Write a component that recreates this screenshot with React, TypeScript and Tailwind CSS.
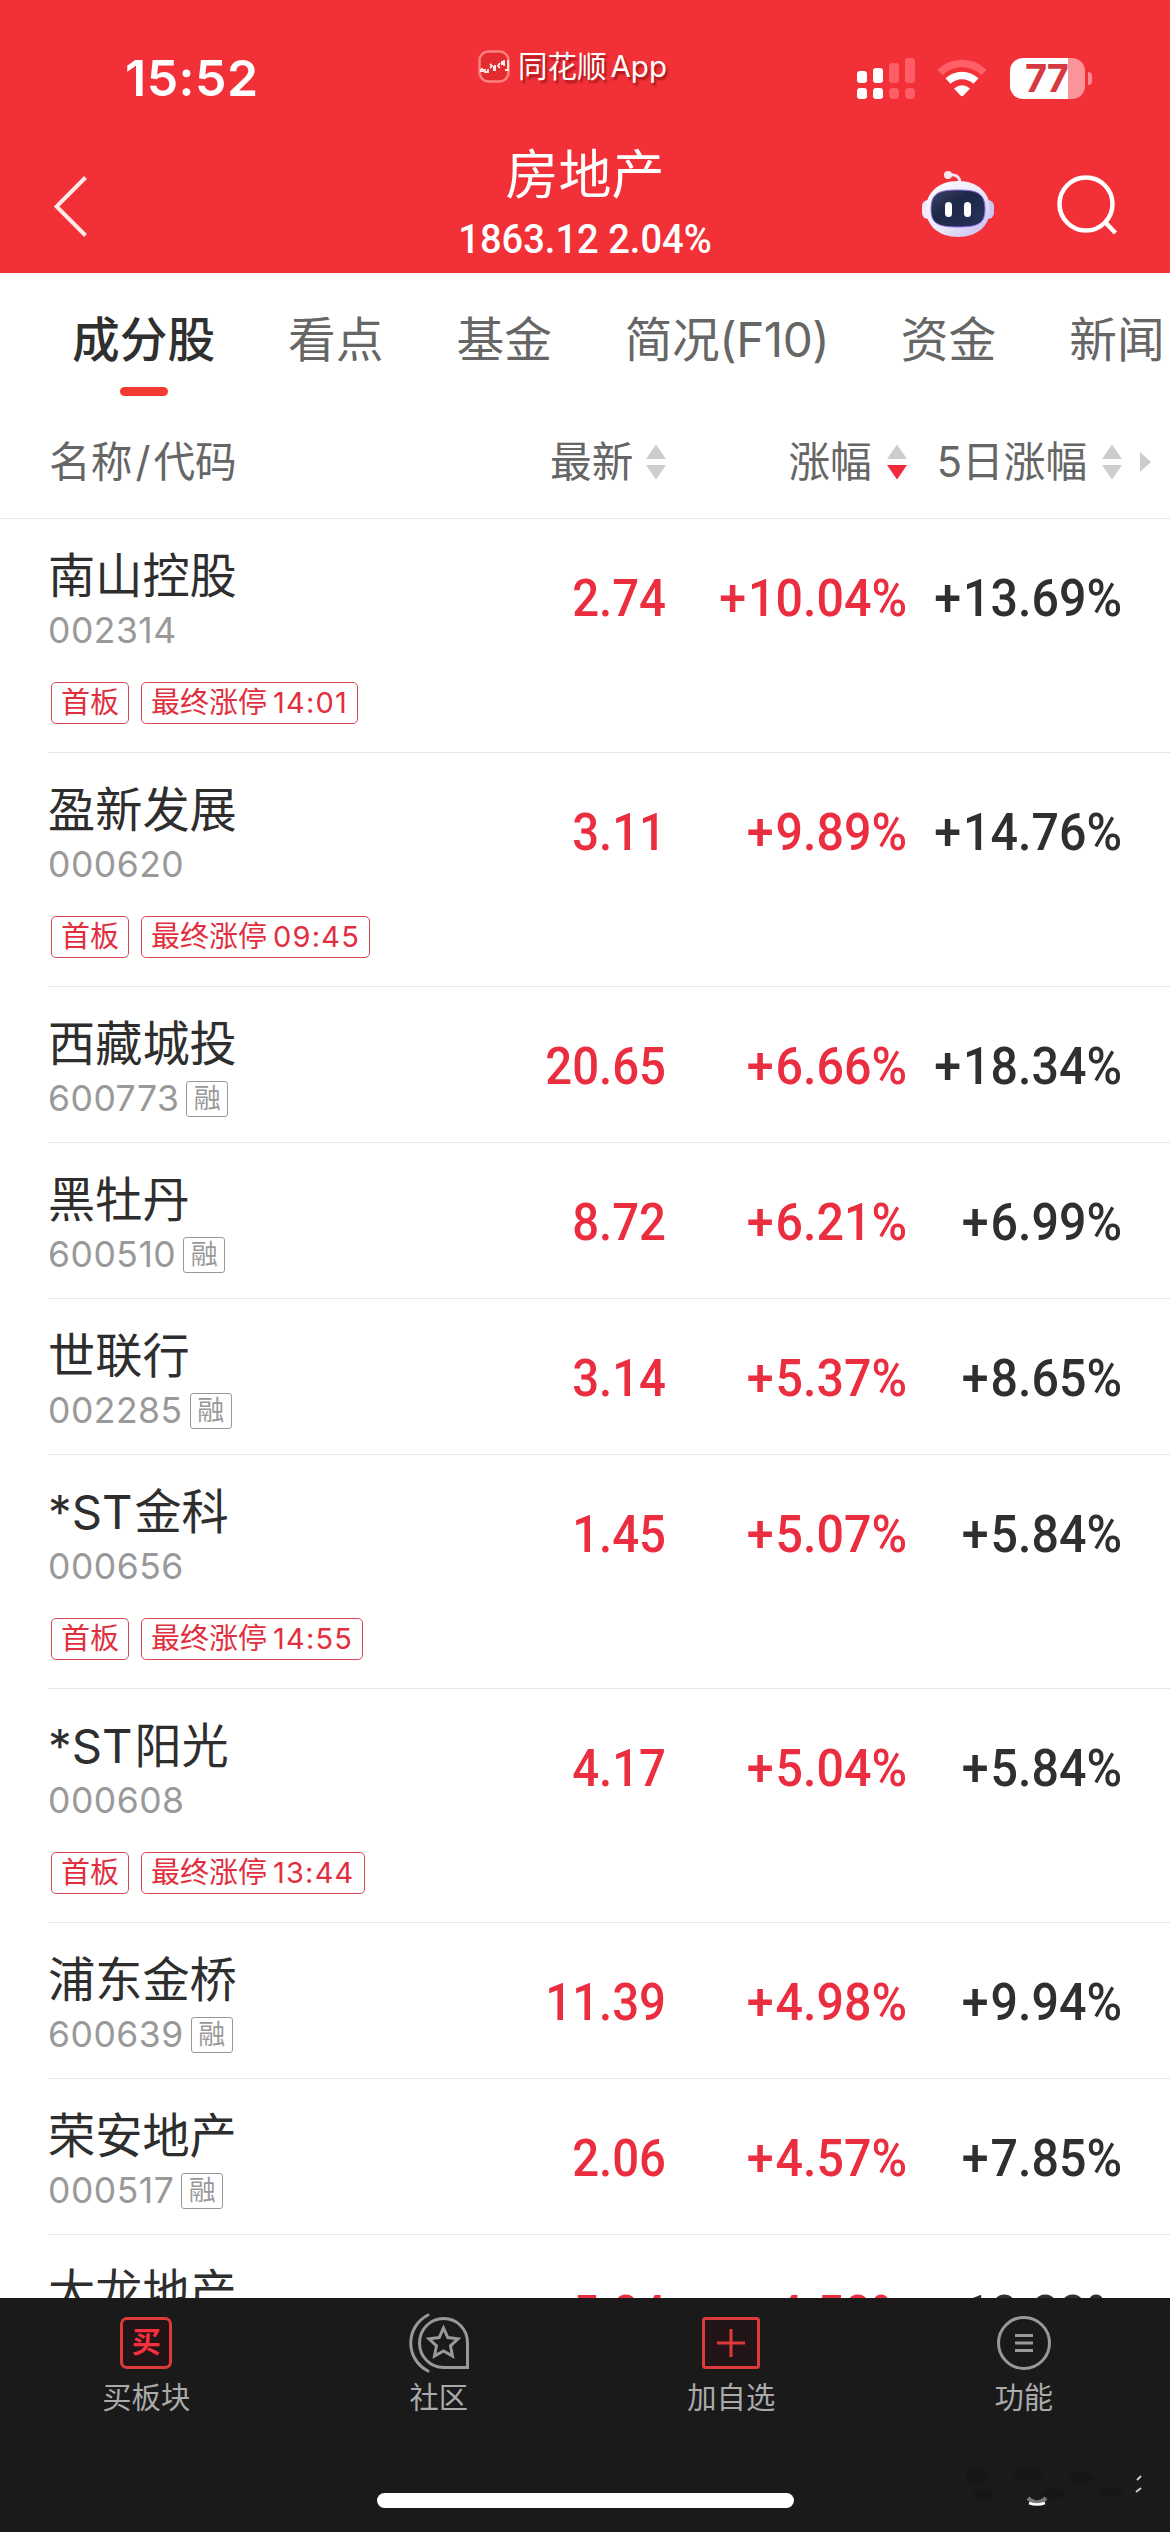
type Stock = {
  name: string;
  code: string;
  price: string;
  change: string;
  change5d: string;
  margin?: boolean;
  limitUpAt?: string;
};

const tabs = ["成分股", "看点", "基金", "简况(F10)", "资金", "新闻"];

const stocks: Stock[] = [
  { name: "南山控股", code: "002314", price: "2.74", change: "+10.04%", change5d: "+13.69%", limitUpAt: "14:01" },
  { name: "盈新发展", code: "000620", price: "3.11", change: "+9.89%", change5d: "+14.76%", limitUpAt: "09:45" },
  { name: "西藏城投", code: "600773", price: "20.65", change: "+6.66%", change5d: "+18.34%", margin: true },
  { name: "黑牡丹", code: "600510", price: "8.72", change: "+6.21%", change5d: "+6.99%", margin: true },
  { name: "世联行", code: "002285", price: "3.14", change: "+5.37%", change5d: "+8.65%", margin: true },
  { name: "*ST金科", code: "000656", price: "1.45", change: "+5.07%", change5d: "+5.84%", limitUpAt: "14:55" },
  { name: "*ST阳光", code: "000608", price: "4.17", change: "+5.04%", change5d: "+5.84%", limitUpAt: "13:44" },
  { name: "浦东金桥", code: "600639", price: "11.39", change: "+4.98%", change5d: "+9.94%", margin: true },
  { name: "荣安地产", code: "000517", price: "2.06", change: "+4.57%", change5d: "+7.85%", margin: true },
  { name: "大龙地产", code: "600159", price: "5.04", change: "+4.50%", change5d: "+10.88%" },
];

function StatusIcons() {
  return (
    <div className="flex items-center pl-px">
      <svg width="58" height="41" viewBox="0 0 58 41" fill="#fff">
        <rect x="0" y="13" width="10" height="12" rx="3" />
        <rect x="16" y="10" width="10" height="15" rx="3" />
        <rect x="0" y="30" width="10" height="11" rx="3" />
        <rect x="16" y="30" width="10" height="11" rx="3" />
        <g fill="#ff5d65">
          <rect x="32" y="5" width="10" height="20" rx="3" />
          <rect x="48" y="0" width="10" height="25" rx="3" />
          <rect x="32" y="30" width="10" height="11" rx="4" />
          <rect x="48" y="30" width="10" height="11" rx="4" />
        </g>
      </svg>
      <svg className="ml-[22px]" width="50" height="40" viewBox="0 0 50 40" fill="none">
        <path d="M3 14.500C15 2.500 35 2.500 47 14.500" stroke="#ff6068" strokeWidth="7.500" />
        <path d="M11 23C19 15.500 31 15.500 39 23" stroke="#fff" strokeWidth="7.500" />
        <path d="M17 30.500Q25 24 33 30.500L26.500 37.500Q25 39 23.500 37.500Z" fill="#fff" />
      </svg>
      <div className="ml-[23px] flex h-[41px] w-[75px] items-center rounded-[13px] bg-[linear-gradient(to_right,#fff_58px,#fb9499_58px)]">
        <span className="ml-[15px] font-['Inter'] text-[38px] leading-[46px] font-bold tracking-[-1px] text-[#d73842]">
          77
        </span>
      </div>
      <div className="ml-[3px] h-[13px] w-[4px] rounded-r-full bg-[#fb8a90]" />
    </div>
  );
}

function RobotIcon() {
  return (
    <svg width="72" height="68" viewBox="0 0 72 68">
      <defs>
        <linearGradient id="shell" x1="0" y1="0" x2="1" y2="1">
          <stop offset="0" stopColor="#fff" />
          <stop offset="0.55" stopColor="#eae6fa" />
          <stop offset="1" stopColor="#c3b8f0" />
        </linearGradient>
        <linearGradient id="visor" x1="0" y1="0" x2="1" y2="1">
          <stop offset="0" stopColor="#3d4566" />
          <stop offset="0.4" stopColor="#1d2747" />
          <stop offset="1" stopColor="#28335b" />
        </linearGradient>
      </defs>
      <path d="M25 5.500C33 3 38 7 38 13" fill="none" stroke="#f3e4f2" strokeWidth="3" />
      <circle cx="26" cy="5" r="4" fill="#f7e9f3" />
      <rect x="0" y="30" width="12" height="19" rx="6" fill="#eee8fa" />
      <rect x="60" y="30" width="12" height="19" rx="6" fill="#c9c4f3" />
      <path
        d="M36 11C57 11 68 24 68 39C68 56 55 67 36 67S4 56 4 39C4 24 15 11 36 11Z"
        fill="url(#shell)"
      />
      <path
        d="M36 20C55 20 63 23 63 39C63 53 57 57 36 57S9 53 9 39C9 23 17 20 36 20Z"
        fill="url(#visor)"
        stroke="#8d6be6"
        strokeWidth="1"
      />
      <rect x="23" y="32" width="7" height="15" rx="3.500" fill="#fff" />
      <rect x="42" y="32" width="7" height="15" rx="3.500" fill="#fff" />
    </svg>
  );
}

function SortArrows({ down = false }: { down?: boolean }) {
  return (
    <svg width="20" height="36" viewBox="0 0 20 36" fill="#cdcdcd">
      <path d="M10 0.500L20 15H0Z" />
      <path d="M0 21H20L10 35.500Z" fill={down ? "#f22a3c" : "#cdcdcd"} />
    </svg>
  );
}

function Header() {
  return (
    <header className="h-[273px] bg-[#f23037] text-white">
      <div className="grid h-[156px] grid-cols-[478px_378px_1fr] items-center">
        <span className="pl-[125px] font-['Inter'] text-[50px] leading-[60px] font-semibold tracking-[0.500px]">15:52</span>
        <div className="-mt-[24px] flex items-center">
          <svg width="32" height="33" viewBox="0 0 32 33" fill="none">
            <rect x="1.500" y="1.500" width="29" height="30" rx="9" fill="#e22c30" stroke="#ff8080" strokeWidth="2.500" />
            <path d="M4 18V22M7 19V22H10V19M12 14L14 16L12 18M17 15V21M22 13L20 16L22 18M26 10V16M30 10V20H27" stroke="#ffe9e4" strokeWidth="1.800" />
            <path d="M2 19H6V22H2ZM15 16H18V21H15ZM23 11H27V15H23Z" fill="#ffe9e4" />
          </svg>
          <span className="ml-2 text-[29.500px] leading-[40px] whitespace-nowrap [text-shadow:2px_3px_2px_rgba(90,0,0,0.5)]">
            同花顺<span className="ml-[4px]">App</span>
          </span>
        </div>
        <StatusIcons />
      </div>
      <div className="flex h-[117px] items-start justify-between pr-[51px] pl-[54px]">
        <svg className="mt-[20px]" width="34" height="61" viewBox="0 0 34 61" fill="none">
          <path d="M31.500 1.500L2.500 30.500L31.500 59.500" stroke="#ffe9e9" strokeWidth="4" />
        </svg>
        <div className="ml-[160px] w-[320px] text-center">
          <h1 className="-mt-[12px] text-[53px] leading-[62px] font-normal">房地产</h1>
          <p className="mt-[11px] scale-x-[0.94] font-['Roboto'] text-[40.500px] leading-[44px] font-medium whitespace-nowrap">
            1863.12 2.04%
          </p>
        </div>
        <div className="flex">
          <div className="mt-[14px]">
            <RobotIcon />
          </div>
          <svg className="mt-[19px] ml-[63px]" width="62" height="62" viewBox="0 0 62 62" fill="none" stroke="#fff" strokeWidth="4.500">
            <circle cx="29" cy="29" r="26.500" />
            <path d="M48 47L58.500 58" />
          </svg>
        </div>
      </div>
    </header>
  );
}

function Tabs() {
  return (
    <nav className="flex h-[132px] gap-[73px] pt-[35px] pl-[72px] text-[47.700px] leading-[64px] whitespace-nowrap text-[#666]">
      {tabs.map((tab, i) =>
        i === 0 ? (
          <div key={tab} className="flex flex-col items-center font-medium text-[#2f2f2f]">
            {tab}
            <div className="mt-[15px] h-[9px] w-[48px] rounded-full bg-[#f33a32]" />
          </div>
        ) : (
          <div key={tab} className={tab.includes("F10") ? "w-[203px] tracking-[-0.500px]" : ""}>
            {tab}
          </div>
        )
      )}
    </nav>
  );
}

function ColumnHeads() {
  return (
    <div className="flex h-[114px] items-center border-b border-[#e6e6e6] pt-px pl-[49px] text-[41.700px] leading-[50px] whitespace-nowrap text-[#666]">
      <span className="w-[501px]">
        名称<span className="mx-[3px]">/</span>代码
      </span>
      <span className="mr-[13px]">最新</span>
      <SortArrows />
      <span className="mr-[15px] ml-[122px]">涨幅</span>
      <SortArrows down />
      <span className="mr-[15px] ml-[30px]">5日涨幅</span>
      <SortArrows />
      <svg className="ml-[18px]" width="11" height="20" viewBox="0 0 11 20">
        <path d="M0 0L11 10L0 20Z" fill="#ccc" />
      </svg>
    </div>
  );
}

function StockRow({ stock }: { stock: Stock }) {
  const isST = stock.name.startsWith("*ST");

  return (
    <div className={`ml-12 shrink-0 border-b border-[#e6e6e6] ${stock.limitUpAt ? "h-[234px]" : "h-[156px]"}`}>
      <div className="grid grid-cols-[402px_216px_241px_215px]">
        <div className="pt-[28px]">
          <div className="text-[47.200px] leading-[58px] whitespace-nowrap text-[#2e2e2e]">
            {isST ? (
              <>
                *ST<span className="ml-[2px]">{stock.name.slice(3)}</span>
              </>
            ) : (
              stock.name
            )}
          </div>
          <div className="mt-[7px] flex h-[38px] items-center gap-[7px]">
            <span className="font-['Inter'] text-[35.500px] leading-[38px] tracking-[0.500px] text-[#999]">{stock.code}</span>
            {stock.margin && (
              <span className="flex h-[36px] w-[42px] items-center justify-center rounded-[3px] border border-[#999] text-[27px] leading-[34px] text-[#999]">
                融
              </span>
            )}
          </div>
        </div>
        <Quote value={stock.price} className="scale-x-[0.91] text-[#ea2d3f]" />
        <Quote value={stock.change} className="scale-x-[0.93] text-[#ea2d3f]" />
        <Quote value={stock.change5d} className="scale-x-[0.93] text-[#2f2f2f]" />
      </div>
      {stock.limitUpAt && (
        <div className="mt-[32px] ml-[3px] flex gap-[12px] text-[29px] leading-[40px] text-[#e22f40]">
          <span className="flex h-[42px] w-[78px] items-center justify-center rounded-[5px] border border-[#dc4553]">首板</span>
          <span className="flex h-[42px] items-center rounded-[5px] border border-[#dc4553] px-[9px]">
            最终涨停<span className="ml-[6px] tracking-[1.200px]">{stock.limitUpAt}</span>
          </span>
        </div>
      )}
    </div>
  );
}

// digits are squeezed a little to get the narrow look of the quote font
function Quote({ value, className }: { value: string; className: string }) {
  const signed = value.startsWith("+");

  return (
    <div className={`origin-right pt-[50px] text-right font-['Roboto'] text-[52px] leading-[60px] font-medium whitespace-nowrap ${className}`}>
      {signed && <span className="mr-[2px]">+</span>}
      {signed ? value.slice(1) : value}
    </div>
  );
}

function BottomBar() {
  const items = [
    {
      label: "买板块",
      icon: (
        <div className="flex h-[52px] w-[52px] items-center justify-center rounded-[7px] border-[3px] border-[#dd3a3c] bg-[#231517] text-[29px] leading-[44px] font-bold text-[#f82f3d]">
          买
        </div>
      ),
    },
    {
      label: "社区",
      icon: (
        <svg width="60" height="60" viewBox="0 0 60 60" fill="none" stroke="#999" strokeWidth="3">
          <path d="M19 2C-4 14-4 46 19 58" strokeLinecap="round" />
          <path d="M34.500 5.500C48 5.500 58.500 16 58.500 30V54.500H34.500C21 54.500 10.500 43.500 10.500 30S21 5.500 34.500 5.500Z" />
          <path d="M34.500 15L38.800 24.500L49 25.800L41.500 32.800L43.500 43L34.500 38L25.500 43L27.500 32.800L20 25.800L30.200 24.500Z" />
        </svg>
      ),
    },
    {
      label: "加自选",
      icon: (
        <svg width="58" height="52" viewBox="0 0 58 52" fill="none" stroke="#dd3a3c" strokeWidth="3">
          <rect x="1.500" y="1.500" width="55" height="49" rx="2" fill="#231517" />
          <path d="M29 12V40M15 26H43" />
        </svg>
      ),
    },
    {
      label: "功能",
      icon: (
        <svg width="54" height="54" viewBox="0 0 54 54" fill="none" stroke="#999" strokeWidth="3">
          <circle cx="27" cy="27" r="25.500" />
          <path d="M18 19.500H36M18 27H36M18 34.500H36" />
        </svg>
      ),
    },
  ];

  return (
    <footer className="relative h-[234px] bg-[#1a1a1a]">
      <div className="grid grid-cols-4 pt-[15px]">
        {items.map((item) => (
          <div key={item.label} className="flex flex-col items-center">
            <div className="flex h-[60px] items-center">{item.icon}</div>
            <span className="mt-[7px] text-[29.300px] leading-[36px] text-[#aaa]">{item.label}</span>
          </div>
        ))}
      </div>
      <div className="mx-auto mt-[77px] h-[15px] w-[417px] rounded-full bg-white" />
      <svg className="absolute right-[20px] bottom-[20px]" width="200" height="50" viewBox="0 0 200 50">
        <g fill="#161616">
          <ellipse cx="27" cy="14" rx="11" ry="7" />
          <ellipse cx="33" cy="33" rx="10" ry="6" />
          <ellipse cx="78" cy="12" rx="14" ry="6" />
          <ellipse cx="104" cy="32" rx="10" ry="5" />
          <ellipse cx="131" cy="16" rx="12" ry="6" />
          <ellipse cx="160" cy="30" rx="12" ry="5" />
        </g>
        <path d="M78 36Q87 45 96 36" fill="none" stroke="#777" strokeWidth="4" />
        <path d="M79 41Q87 44 95 41" fill="none" stroke="#fff" strokeWidth="2.500" />
        <path d="M187 18L191 14M186 30L191 26" stroke="#ccc" strokeWidth="2" />
      </svg>
    </footer>
  );
}

export default function App() {
  return (
    <div className="flex h-[2532px] w-[1170px] flex-col overflow-hidden bg-white font-['Inter','Noto_Sans_CJK_SC',sans-serif]">
      <Header />
      <Tabs />
      <ColumnHeads />
      <main className="flex h-[1779px] flex-col overflow-hidden">
        {stocks.map((stock) => (
          <StockRow key={stock.code} stock={stock} />
        ))}
      </main>
      <BottomBar />
    </div>
  );
}
